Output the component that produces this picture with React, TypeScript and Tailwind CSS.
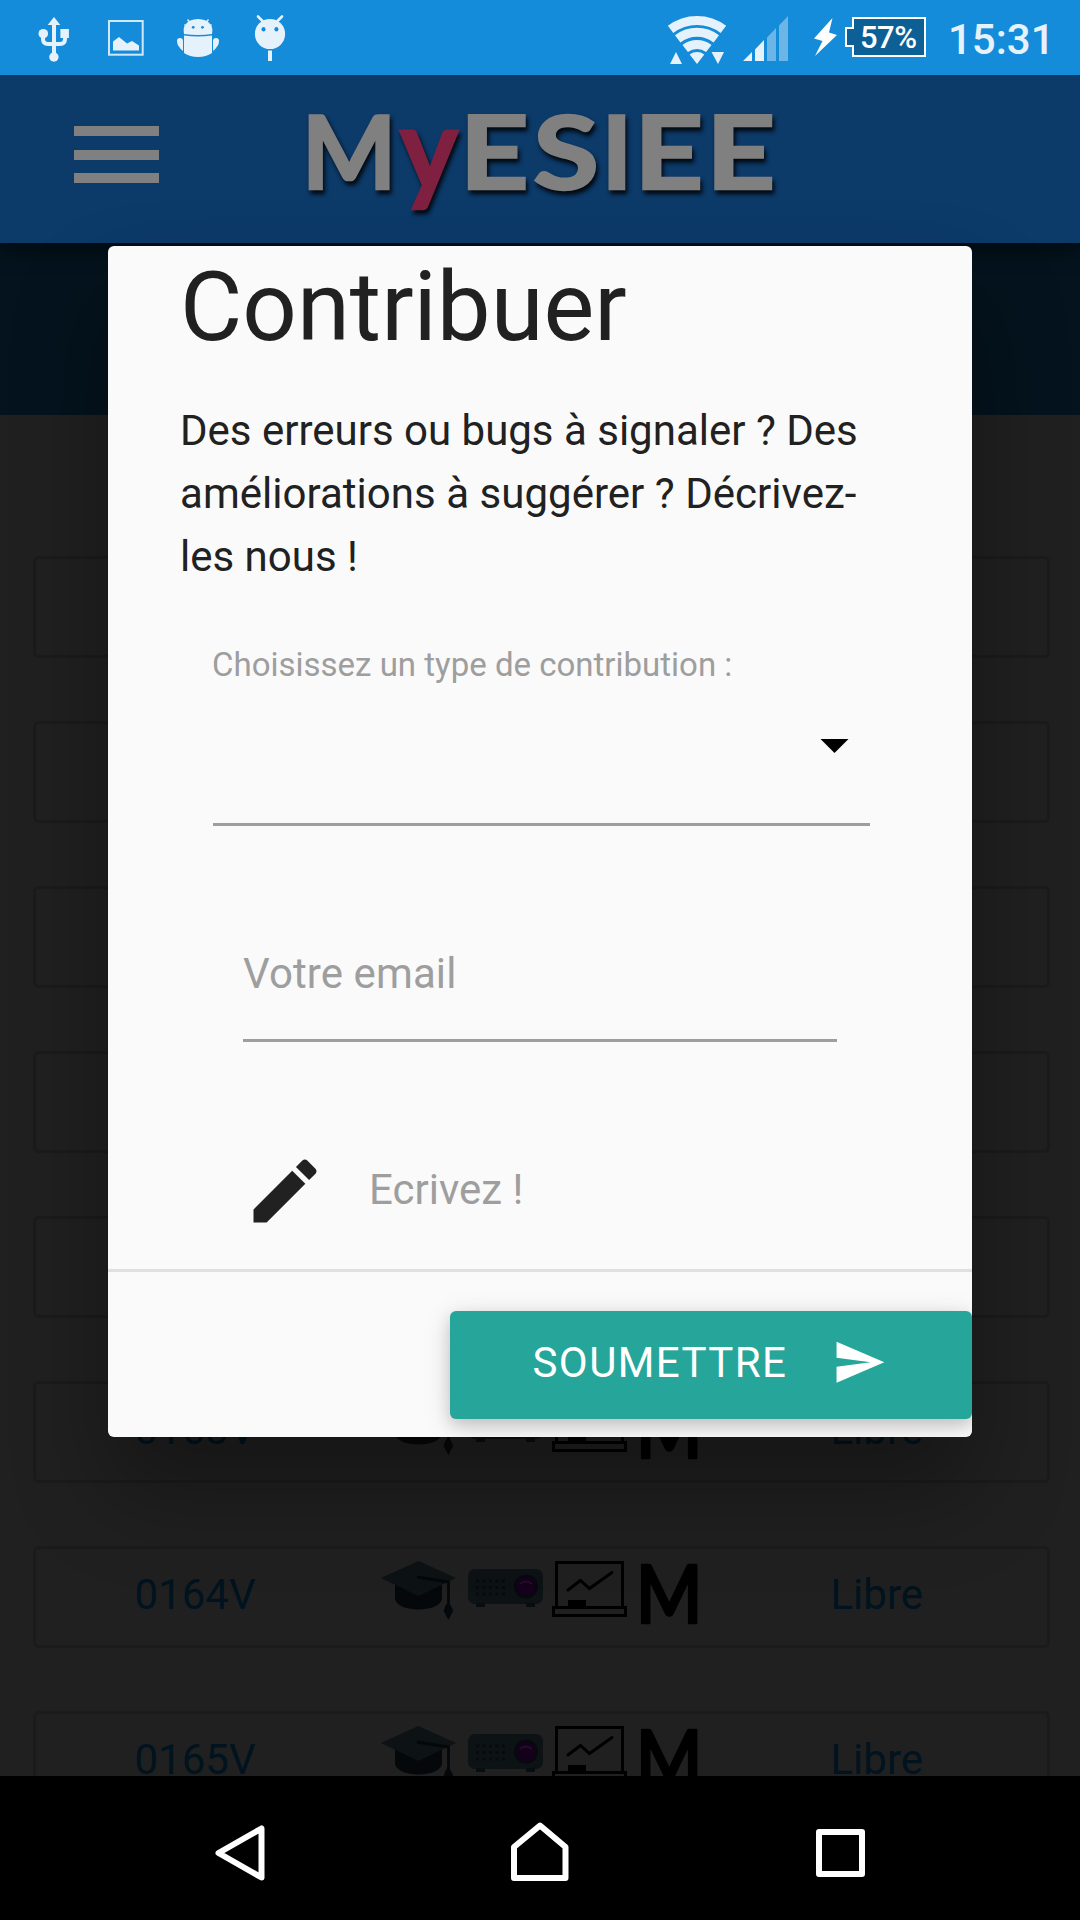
import React from "react";

const rooms = ["0158V", "0159V", "0160V", "0161V", "0162V", "0163V", "0164V", "0165V"];

function StatusBar() {
  return (
    <div className="flex h-[75px] shrink-0 items-center justify-between bg-[#148cda]">
      <svg className="h-[75px] w-[300px]" viewBox="0 0 300 75" fill="#e6f2fb">
        <path d="M54 17l6.3 8H56v30h-4V25h-4.3z" />
        <circle cx="53.9" cy="57" r="4.7" />
        <circle cx="43.3" cy="33.7" r="4.8" />
        <rect x="60.4" y="29" width="8.5" height="9" />
        <path d="M43 35v4q0 5 5 5h12q5 0 5-5v-4" fill="none" stroke="#e6f2fb" strokeWidth="4" />
        <rect x="109" y="21" width="33.7" height="33.7" fill="none" stroke="#d0e8f8" strokeWidth="2" />
        <path d="M113 41.500l6-4.500 8 6.500 5-2.500 7 4.500v5h-26z" />
        <path d="M184 34q-1-6 1-9 4-6 13-6t13 6q2 3 1 9-14 2-28 0z" />
        <path d="M187.500 19.500l3 4m18-4l-3 4M184.500 24.500l3 3M211.500 24.500l-3 3" stroke="#e6f2fb" strokeWidth="1.300" />
        <path d="M184 35.500q14 2 28 0V53q-6 4-14 4t-14-4z" />
        <path d="M183 51q-6-5-6-10 0-3 3-3t3 3zM213 51q6-5 6-10 0-3-3-3t-3 3z" />
        <circle cx="193.200" cy="27.300" r="1.400" fill="#148cda" />
        <circle cx="202.500" cy="27.300" r="1.400" fill="#148cda" />
        <circle cx="270" cy="34" r="15.100" />
        <path d="M258 16.500l4.500 4.500m19.500-4.500l-4.500 4.500" stroke="#e6f2fb" strokeWidth="2.600" strokeLinecap="round" />
        <ellipse cx="263.500" cy="29.300" rx="2" ry="2.300" fill="#148cda" />
        <ellipse cx="276.400" cy="29.300" rx="2" ry="2.300" fill="#148cda" />
        <rect x="268" y="50.500" width="4" height="10.500" />
      </svg>
      <div className="flex h-full">
        <svg className="h-[75px] w-[180px]" viewBox="660 0 180 75" fill="#e6f2fb">
          <g fill="none" stroke="#e6f2fb" strokeWidth="9">
            <path d="M670.6 29.4A43.500 43.500 0 0 1 723.4 29.4" />
            <path d="M677.700 38.800A31.800 31.800 0 0 1 716.300 38.800" />
            <path d="M685.200 48.500A19.500 19.500 0 0 1 708.800 48.500" />
          </g>
          <path d="M697 64l-7.300-9.500a12 12 0 0 1 14.600 0zM670 64l6-12 6 12zM711.500 52h12.500l-6 12z" />
          <path d="M743 61l9-9v9zM755 61V49.500l9-9.500v21z" />
          <path d="M767 61V37.500l9-9.500v33zM779 61V25.500l9-9.500v45z" fill="#6bb5e7" />
          <path d="M832.500 18L814 38.500l8.500 2.500-7.500 15L837 35l-8-2.500z" fill="#fff" />
        </svg>
        <div className="flex pt-[17px]">
          <div className="relative ml-[12px] h-10 w-[74px] border-2 border-white bg-[#0c6096]">
            <span className="absolute -left-[9px] top-[8px] h-5 w-[9px] border-2 border-r-0 border-white bg-[#0c6096]" />
            <span className="absolute left-[6px] top-[3px] font-[Roboto] text-[31px] font-medium leading-[32px] tracking-[-0.5px] text-white">57%</span>
          </div>
        </div>
        <div className="ml-[22px] w-[132px] pt-[15px] font-[Roboto] text-[42px] font-medium leading-[50px] text-[#e6f2fb]">15:31</div>
      </div>
    </div>
  );
}

const logoText = [
  { t: "M", x: 308.5, w: 82 },
  { t: "y", x: 398.5, w: 61 },
  { t: "E", x: 467.5, w: 58.5 },
  { t: "S", x: 534, w: 63 },
  { t: "I", x: 608.3, w: 17 },
  { t: "E", x: 642, w: 58.5 },
  { t: "E", x: 714, w: 58.5 },
];

const OUTLINE = 2.4;

// Fits each letter's ink box between x and x + w.
function fitLetter(t: string, x: number, w: number, size: number) {
  const ctx = document.createElement("canvas").getContext("2d")!;
  ctx.font = `700 ${size}px Lato`;
  const m = ctx.measureText(t);
  const left = -m.actualBoundingBoxLeft;
  const k = w / (m.actualBoundingBoxRight - left + OUTLINE);
  return { k, tx: x - (left - OUTLINE / 2) * k };
}

function Header() {
  return (
    <header className="relative flex h-[168px] shrink-0 items-start bg-[#0c3a69] shadow-[0_6px_18px_rgba(0,0,0,0.5)]">
      <div className="ml-[74px] mt-[51px] flex w-[85px] flex-col gap-[13.500px]">
        <span className="h-[10px] bg-[#808080]" />
        <span className="h-[10px] bg-[#808080]" />
        <span className="h-[10px] bg-[#808080]" />
      </div>
      <svg className="ml-[141px] h-[168px] w-[500px] drop-shadow-[2px_4px_2px_rgba(0,0,0,0.85)]" viewBox="300 75 500 168">
        {logoText.map((l, i) => {
          const size = l.t === "y" ? 115 : 102;
          const { k, tx } = fitLetter(l.t, l.x, l.w, size);
          const color = l.t === "y" ? "#802040" : "#808080";
          return (
            <text
              key={i}
              transform={`translate(${tx} ${l.t === "y" ? 189.5 : 188.5}) scale(${k} 1)`}
              fontFamily="Lato"
              fontWeight="700"
              fontSize={size}
              fill={color}
              stroke={color}
              strokeWidth={OUTLINE}
            >
              {l.t}
            </text>
          );
        })}
      </svg>
    </header>
  );
}

function Equipment() {
  const dots = [0, 1, 2].flatMap((r) => [0, 1, 2, 3, 4].map((c) => [476 + c * 6.500, 1579.500 + r * 6.500]));
  return (
    <svg className="h-[96px] w-[330px]" viewBox="375 1549 330 96">
      <path d="M395 1578v21c3 14 44 14 47 0v-21z" fill="#05080a" />
      <path d="M381 1578l37.500-17 37.500 17-37.500 18z" fill="#0d1214" />
      <path d="M417 1577l31.500 5v24" fill="none" stroke="#05080a" strokeWidth="2.800" />
      <path d="M448 1602c3 3 5 7 5 9l-4.500 9-5-9q1-5 4.500-9z" fill="#05080a" />
      <rect x="468" y="1569" width="75" height="35" rx="7" fill="#0d1214" />
      <path d="M476 1603h9v4h-9zM526 1603h9v4h-9z" fill="#080d0f" />
      {dots.map(([x, y], i) => (
        <rect key={i} x={x} y={y} width="3" height="3" fill="#070b0c" />
      ))}
      <circle cx="526" cy="1586.500" r="12" fill="#070a0c" />
      <circle cx="526" cy="1586.500" r="9.800" fill="#15001c" />
      <path d="M520 1584q6-5 12 0" fill="none" stroke="#22102a" strokeWidth="2" />
      <g fill="none" stroke="#000" strokeWidth="3">
        <path d="M556.500 1607v-44.500h66v44.500" />
        <rect x="553.500" y="1607.500" width="72" height="8" />
        <path d="M568 1590l12.500-9.500 9 8L612 1572.500" strokeLinecap="round" />
      </g>
      <path d="M568 1600h18v6h-18z" />
      <text transform="translate(636 1622.500) scale(0.885 1)" fontFamily="Lato" fontWeight="600" fontSize="80" fill="#000" stroke="#000" strokeWidth="2.500" strokeLinejoin="round">M</text>
    </svg>
  );
}

function RoomList() {
  return (
    <main className="flex min-h-0 flex-1 flex-col overflow-hidden bg-[#202020]">
      <div className="h-[172px] shrink-0 bg-[#04131d]" />
      <div className="mt-[141px] flex flex-col gap-[63px] pl-[33px] pr-[30px]">
        {rooms.map((r) => (
          <div key={r} className="flex h-[102px] shrink-0 items-center rounded-md border-3 border-[#1b1b1b] font-[Roboto] text-[42px] text-[#01131e]">
            <span className="w-[339px] pb-[6px] pl-[98.500px]">{r}</span>
            <Equipment />
            <span className="pb-[6px] pl-[125.500px]">Libre</span>
          </div>
        ))}
      </div>
    </main>
  );
}

function ContributeModal() {
  return (
    <section className="flex h-[1191px] w-[864px] flex-col overflow-hidden rounded-md bg-[#fafafa] font-[Roboto] text-[42px] text-[#212121]">
      <div className="h-[1023px] overflow-hidden px-[72px]">
        <h4 className="mt-[9px] text-[95.760px] leading-[105px]">Contribuer</h4>
        <p className="mt-[39px] leading-[63px]">
          Des erreurs ou bugs à signaler ? Des
          <br />
          <span className="tracking-[0.030px]">améliorations à suggérer ? Décrivez-</span>
          <br />
          les nous !
        </p>
        <div className="ml-[33px] mr-[30px] mt-[52px] h-[185.500px] border-b-3 border-[#9e9e9e]">
          <label className="-ml-px block text-[33px] leading-[50px] text-[#9e9e9e]">Choisissez un type de contribution :</label>
          <svg className="ml-auto mr-[21px] mt-[48px] h-[16px] w-[29px]" viewBox="0 0 29 16">
            <path d="M0.500 1h28L14.500 15z" />
          </svg>
        </div>
        <div className="ml-[63px] mr-[63px] mt-[116.500px] h-[100px] border-b-3 border-[#9e9e9e] leading-[63px] tracking-[0.100px] text-[#9e9e9e]">Votre email</div>
        <div className="ml-[63px] mt-[106px] flex">
          <svg className="mt-px size-[84px]" viewBox="0 0 24 24" fill="#212121">
            <path d="M3 17.250V21h3.750L17.810 9.940l-3.750-3.750L3 17.250zM20.710 7.040c.39-.39.39-1.020 0-1.410l-2.340-2.340c-.39-.39-1.020-.39-1.410 0l-1.830 1.830 3.750 3.750 1.830-1.830z" />
          </svg>
          <span className="ml-[42px] mt-[10px] leading-[63px] text-[#9e9e9e]">Ecrivez !</span>
        </div>
      </div>
      <footer className="flex flex-1 justify-end border-t-3 border-[#e0e0e0] pt-[39px]">
        <button className="flex h-[108px] w-[522px] items-center rounded-md bg-[#26a69a] pb-[6px] pl-[82.500px] tracking-[1.400px] text-white shadow-[0_6px_15px_rgba(0,0,0,0.16),0_6px_30px_rgba(0,0,0,0.12)]">
          SOUMETTRE
          <svg className="ml-[45px] size-[54.600px]" viewBox="0 0 24 24" fill="#fff">
            <path d="M2.010 21L23 12 2.010 3 2 10l15 2-15 2z" />
          </svg>
        </button>
      </footer>
    </section>
  );
}

function NavBar() {
  return (
    <nav className="flex h-[144px] shrink-0 items-center bg-black">
      <svg className="h-[144px] w-[1080px]" viewBox="0 1776 1080 144" fill="none" stroke="#fff" strokeWidth="6" strokeLinejoin="round">
        <path d="M261.500 1828.500v49L218.500 1853z" />
        <path d="M514 1847v31h51.500v-31L540 1825.500z" />
        <rect x="819" y="1832" width="43" height="42" />
      </svg>
    </nav>
  );
}

export default function App() {
  return (
    <div className="relative flex h-[1920px] w-[1080px] flex-col overflow-hidden bg-black">
      <StatusBar />
      <div className="relative flex min-h-0 flex-1 flex-col overflow-hidden">
        <Header />
        <RoomList />
        <div className="absolute inset-0 flex items-start justify-center pt-[171px]">
          <div className="rounded-md shadow-[0_54px_96px_rgba(0,0,0,0.33)]">
            <ContributeModal />
          </div>
        </div>
      </div>
      <NavBar />
    </div>
  );
}
